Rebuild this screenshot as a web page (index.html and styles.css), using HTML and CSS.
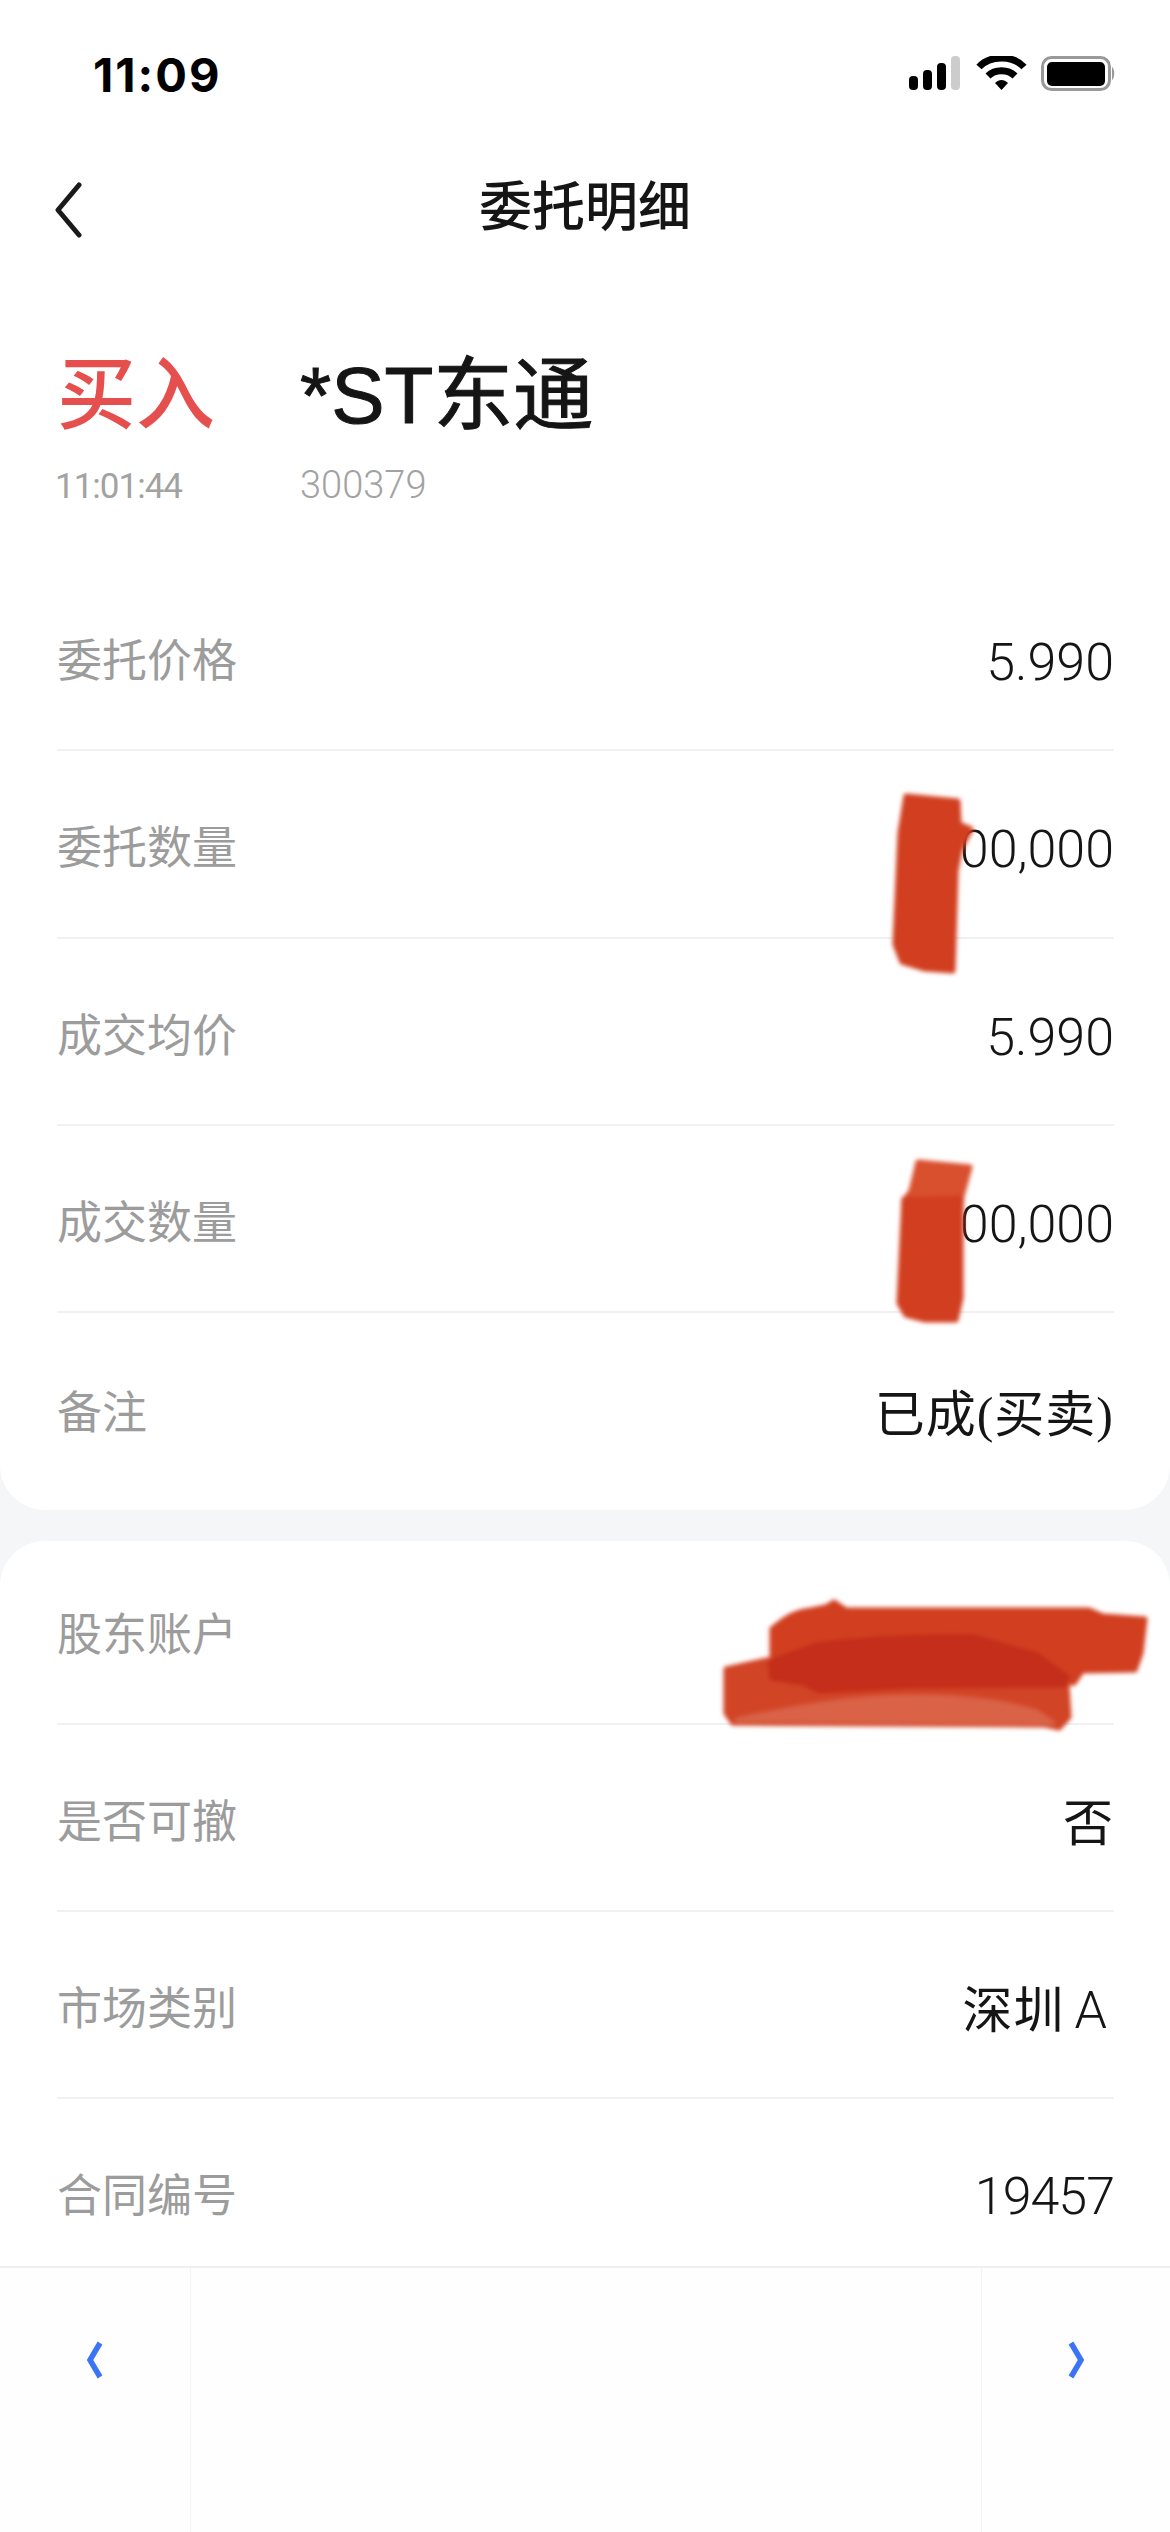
FILE: index.html
```html
<!DOCTYPE html>
<html lang="zh-CN">
<head>
  <meta charset="UTF-8" />
  <meta name="viewport" content="width=device-width, initial-scale=1.0"/>
  <title>委托明细</title>
  <link rel="stylesheet" href="styles.css">
</head>
<body>
  <div class="page">
    <section class="card card-top">
      <div class="status-bar">
        <span class="clock">11:09</span>
        <svg class="status-icons" viewBox="0 0 209 40" width="209" height="40">
          <rect x="2" y="20" width="9" height="14" rx="4" fill="#000"/>
          <rect x="16" y="14" width="9" height="20" rx="4" fill="#000"/>
          <rect x="30" y="7" width="9" height="27" rx="4" fill="#000"/>
          <rect x="44" y="0" width="9" height="34" rx="4" fill="#ccc"/>
          <path d="M72 11 C83 -1 106 -1 117 11" fill="none" stroke="#000" stroke-width="7"/>
          <path d="M81 20 C88 13 101 13 108 20" fill="none" stroke="#000" stroke-width="7"/>
          <path d="M88 27 C92 23 97 23 101 27 L94.500 34 Z" fill="#000"/>
          <rect x="135.500" y="1.500" width="67" height="32" rx="9" fill="none" stroke="#999" stroke-width="3"/>
          <rect x="140" y="6" width="58" height="24" rx="5" fill="#000"/>
          <path d="M205 11 C208 13 208 22 205 24 Z" fill="#999"/>
        </svg>
      </div>

      <header class="nav">
        <svg class="back" viewBox="0 0 30 56" width="30" height="56">
          <path d="M26 3 L5 28 L26 53" fill="none" stroke="#1a1a1a" stroke-width="5" stroke-linecap="round" stroke-linejoin="round"/>
        </svg>
        <h1 class="nav-title">委托明细</h1>
      </header>

      <div class="hero">
        <div class="hero-side">
          <div class="side-buy">买入</div>
          <div class="hero-sub order-time">11:01:44</div>
        </div>
        <div>
          <div class="stock-name">*ST东通</div>
          <div class="hero-sub stock-code">300379</div>
        </div>
      </div>

      <div class="rows">
        <div class="row"><span class="label">委托价格</span><span class="value">5.990</span></div>
        <div class="row"><span class="label">委托数量</span><span class="value">100,000</span></div>
        <div class="row"><span class="label">成交均价</span><span class="value">5.990</span></div>
        <div class="row"><span class="label">成交数量</span><span class="value">100,000</span></div>
        <div class="row row-end"><span class="label">备注</span><span class="value value-cn">已成(买卖)</span></div>
      </div>
    </section>

    <section class="card card-more">
      <div class="rows">
        <div class="row row-first"><span class="label">股东账户</span></div>
        <div class="row"><span class="label">是否可撤</span><span class="value value-cn">否</span></div>
        <div class="row"><span class="label">市场类别</span><span class="value value-cn">深圳<span class="market-a">A</span></span></div>
        <div class="row row-last"><span class="label">合同编号</span><span class="value value-id">19457</span></div>
      </div>
    </section>

    <footer class="pager">
      <div class="pager-btn">
        <svg viewBox="0 0 20 40" width="20" height="40"><path d="M15 3 L5 20 L15 37" fill="none" stroke="#3b74f6" stroke-width="5.500"/></svg>
      </div>
      <div class="pager-mid"></div>
      <div class="pager-btn pager-next">
        <svg viewBox="0 0 20 40" width="20" height="40"><path d="M5 3 L15 20 L5 37" fill="none" stroke="#3b74f6" stroke-width="5.500"/></svg>
      </div>
    </footer>

    <!-- marker strokes scribbled over the private numbers -->
    <svg class="scribbles" viewBox="0 0 1170 2532" width="1170" height="2532">
      <g class="ink">
        <path class="ink-main" d="M906 796 L958 801 L959 824 L971 829 L960 850 L956 871 L953 971 L925 969 L902 962 L895 944 L900 833 Z"/>
        <path class="ink-pale" d="M918 1162 L970 1167 L962 1196 L960 1215 L904 1215 L904 1201 L911 1191 Z"/>
        <path class="ink-main" d="M904 1199 L961 1198 L961 1298 L956 1320 L925 1320 L906 1315 L899 1303 Z"/>
        <path class="ink-main" d="M772 1629 C785 1618 796 1611 811 1610 L826 1607 L834 1602 L846 1610 L1089 1610 L1103 1616 L1145 1619 L1141 1653 L1135 1670 L1082 1671 L1074 1683 L772 1678 Z"/>
        <path class="ink-low" d="M726 1669 L767 1660 L1067 1685 L1069 1717 L1059 1728 L1045 1725 L733 1723 L726 1713 Z"/>
        <path class="ink-soft" d="M737 1720 C800 1706 860 1696 910 1697 C950 1696 1000 1700 1037 1712 L1053 1723 Z"/>
        <path class="ink-dark" d="M770 1662 L816 1645 C870 1638 930 1636 974 1637 L1037 1655 L1067 1677 L1064 1685 L910 1686 L819 1691 L804 1683 L772 1678 Z"/>
      </g>
    </svg>
  </div>
</body>
</html>
```

FILE: styles.css
```css
body {
  margin: 0;
  background: #f4f6f8;
  font-family: Roboto, "Noto Sans CJK SC", sans-serif;
  color: #151515;
}
.page {
  position: relative;
  width: 1170px;
  height: 2532px;
  display: flex;
  flex-direction: column;
  overflow: hidden;
}
.card {
  background: #fff;
}
.card-top {
  height: 1510px;
  border-radius: 0 0 45px 45px;
}
.card-more {
  flex: 1;
  margin-top: 31px;
  border-radius: 45px 45px 0 0;
}

/* status bar */
.status-bar {
  height: 148px;
  padding: 0 54px 0 93px;
  display: flex;
  justify-content: space-between;
  align-items: center;
}
.clock {
  font-family: Inter, sans-serif;
  font-size: 47px;
  font-weight: 700;
  letter-spacing: 2px;
  color: #000;
}
.status-icons {
  display: block;
  margin-top: 4px;
}

/* nav */
.nav {
  position: relative;
  height: 116px;
  display: flex;
  align-items: center;
  justify-content: center;
}
.back {
  position: absolute;
  left: 53px;
  top: 34px;
}
.nav-title {
  margin: 4px 0 0;
  font-size: 53px;
  font-weight: 500;
  line-height: 60px;
}

/* order heading */
.hero {
  height: 300px;
  box-sizing: border-box;
  padding: 87px 0 0 57px;
  display: flex;
}
.hero-side {
  width: 243px;
}
.side-buy {
  font-size: 79px;
  font-weight: 500;
  line-height: 90px;
  color: #e5504f;
}
.stock-name {
  font-family: "Liberation Sans", "Noto Sans CJK SC", sans-serif;
  font-size: 80px;
  font-weight: 400;
  line-height: 90px;
  -webkit-text-stroke: 1px #151515;
}
.hero-sub {
  margin-top: 26px;
  font-size: 36px;
  line-height: 40px;
  color: #a2a2a2;
}
.order-time {
  margin-left: -2px;
  font-size: 35px;
  letter-spacing: -1px;
}
.stock-code {
  margin-top: 24px;
  font-size: 38px;
  font-weight: 300;
}

/* detail rows */
.rows {
  margin: 0 56px 0 57px;
}
.row {
  height: 187.300px;
  box-sizing: border-box;
  padding-top: 2px;
  border-bottom: 2px solid #f1f1f1;
  display: flex;
  justify-content: space-between;
  align-items: center;
}
.row-end {
  height: 196px;
  padding-top: 0;
  padding-bottom: 4px;
  border-bottom: 0;
}
.row-first {
  height: 183.500px;
  padding-top: 0;
}
.row-last {
  height: 166px;
  padding-top: 20px;
  border-bottom: 0;
}
.label {
  font-size: 45px;
  color: #9c9c9c;
}
.value {
  font-size: 52px;
  font-weight: 300;
  padding-top: 10px;
}
.value-id {
  padding-top: 8px;
  letter-spacing: -1px;
}
.value-cn {
  padding-top: 2px;
  font-family: "Liberation Serif", "Noto Sans CJK SC", serif;
  font-size: 50px;
  font-weight: 400;
  letter-spacing: 1px;
}
.market-a {
  font-family: Roboto, sans-serif;
  font-weight: 300;
  font-size: 52px;
  margin: 0 6px 0 10px;
}

/* prev / next bar */
.pager {
  height: 266px;
  box-sizing: border-box;
  background: #fefefe;
  border-top: 2px solid #f0f0f0;
  display: flex;
}
.pager-btn {
  width: 190px;
  padding-top: 72px;
  box-sizing: border-box;
  display: flex;
  justify-content: center;
}
.pager-next {
  width: 188px;
}
.pager-btn svg {
  display: block;
}
.pager-mid {
  flex: 1;
  border-left: 1px solid #f3f3f3;
  border-right: 1px solid #f3f3f3;
}

/* marker ink on top of the rows */
.scribbles {
  position: absolute;
  left: 0;
  top: 0;
  pointer-events: none;
}
.ink {
  filter: blur(2px);
}
.ink path {
  stroke-width: 5px;
  stroke-linejoin: round;
}
.ink-main {
  fill: #d13f20;
  stroke: #d13f20;
}
.ink-pale {
  fill: #d9502f;
  stroke: #d9502f;
}
.ink-low {
  fill: #d24426;
  stroke: #d24426;
}
.ink-soft {
  fill: #d96247;
  stroke: #d96247;
}
.ink-dark {
  fill: #c42e1a;
  stroke: #c42e1a;
}
```
